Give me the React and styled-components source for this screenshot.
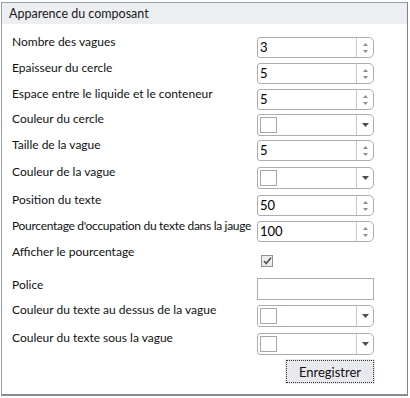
import React from "react";
import styled, { createGlobalStyle } from "styled-components";

const FONT = `Lato, "Liberation Sans", Arial, sans-serif`;

const Global = createGlobalStyle`
  html, body { margin: 0; padding: 0; background: #ffffff; }
  body { font-family: ${FONT}; }
`;

const Frame = styled.div`
  box-sizing: border-box;
  margin: 2px 0 0 1px;
  width: 407px;
  height: 394px;
  border: 1px solid #9aa0a6;
  border-right-color: #7d838a;
  border-bottom: 2px solid #858b92;
  background: #fff;
  display: flex;
  flex-direction: column;
`;

const Header = styled.div`
  height: 21px;
  background: #eceef1;
  padding-left: 7px;
  display: flex;
  align-items: center;
  font-size: 12.5px;
  color: #1a1a1a;
`;

const Body = styled.div`
  padding: 13px 0 0 10px;
  display: flex;
  flex-direction: column;
`;

const Row = styled.div`
  display: flex;
  align-items: flex-start;
  height: ${(p) => p.$h}px;
`;

const Label = styled.div`
  width: 245px;
  margin-top: ${(p) => (p.$shift != null ? p.$shift : -3)}px;
  font-size: 12px;
  line-height: 16px;
  letter-spacing: ${(p) => (p.$tight ? "-0.3px" : "0")};
  color: #111;
  white-space: nowrap;
`;

const Control = styled.div`
  width: 117px;
  display: flex;
  margin-top: ${(p) => p.$top || 0}px;
`;

const SpinBox = styled.div`
  box-sizing: border-box;
  width: 117px;
  height: 21px;
  border: 1px solid #abadb3;
  border-radius: 3px 5px 5px 3px;
  display: flex;
  background: #fff;
`;

const SpinValue = styled.div`
  flex: 1;
  padding-left: 2px;
  font-size: 13px;
  line-height: 19px;
  color: #000;
`;

const Side = styled.div`
  width: 16px;
  border-left: 1px solid #c6c8cc;
  display: flex;
  flex-direction: column;
  align-items: center;
  justify-content: center;
  gap: 4px;
`;

const Arrow = styled.svg`
  display: block;
`;

const ColorBox = styled.div`
  box-sizing: border-box;
  width: 117px;
  height: 22px;
  border: 1px solid #abadb3;
  border-radius: 3px 5px 5px 3px;
  display: flex;
  align-items: center;
  background: #fff;
`;

const Swatch = styled.div`
  box-sizing: border-box;
  width: 17px;
  height: 16px;
  margin-left: 2px;
  border: 1px solid #a3a6ab;
  background: #fff;
`;

const ColorFill = styled.div`
  flex: 1;
`;

const DropSide = styled.div`
  width: 16px;
  height: 100%;
  border-left: 1px solid #c6c8cc;
  display: flex;
  align-items: center;
  justify-content: center;
`;

const TextInput = styled.div`
  box-sizing: border-box;
  width: 117px;
  height: 22px;
  border: 1px solid #abadb3;
  background: #fff;
`;

const Check = styled.div`
  box-sizing: border-box;
  width: 12px;
  height: 12px;
  margin-left: 4px;
  border: 1px solid #8f9399;
  background: #ececec;
  display: flex;
  align-items: center;
  justify-content: center;
`;

const ButtonRow = styled.div`
  display: flex;
  padding-left: 273px;
  margin-top: -1px;
`;

const Button = styled.button`
  box-sizing: border-box;
  width: 90px;
  height: 25px;
  padding: 1px;
  border: none;
  background: #e8e9ec;
  font-family: ${FONT};
  font-size: 13px;
  color: #111;
  cursor: pointer;
`;

const Focus = styled.span`
  box-sizing: border-box;
  display: flex;
  align-items: center;
  justify-content: center;
  width: 100%;
  height: 100%;
  border: 1px dotted #333;
`;

const Up = () => (
  <Arrow width="5" height="3" viewBox="0 0 5 3">
    <path d="M2.5 0 L5 3 L0 3 Z" fill="#8a8d92" />
  </Arrow>
);
const Down = () => (
  <Arrow width="5" height="3" viewBox="0 0 5 3">
    <path d="M0 0 L5 0 L2.5 3 Z" fill="#8a8d92" />
  </Arrow>
);

const Spin = ({ value }) => (
  <SpinBox>
    <SpinValue>{value}</SpinValue>
    <Side>
      <Up />
      <Down />
    </Side>
  </SpinBox>
);

const Color = () => (
  <ColorBox>
    <Swatch />
    <ColorFill />
    <DropSide>
      <Arrow width="7" height="4" viewBox="0 0 7 4">
        <path d="M0 0 L7 0 L3.5 4 Z" fill="#4a4d52" />
      </Arrow>
    </DropSide>
  </ColorBox>
);

const rows = [
  { label: "Nombre des vagues", type: "spin", value: "3", h: 26 },
  { label: "Epaisseur du cercle", type: "spin", value: "5", h: 26 },
  { label: "Espace entre le liquide et le conteneur", type: "spin", value: "5", h: 25 },
  { label: "Couleur du cercle", type: "color", h: 26 },
  { label: "Taille de la vague", type: "spin", value: "5", h: 27 },
  { label: "Couleur de la vague", type: "color", h: 28 },
  { label: "Position du texte", type: "spin", value: "50", h: 26 },
  { label: "Pourcentage d'occupation du texte dans la jauge", type: "spin", value: "100", h: 30, tight: true },
  { label: "Afficher le pourcentage", type: "check", h: 27 },
  { label: "Police", type: "text", h: 27 },
  { label: "Couleur du texte au dessus de la vague", type: "color", h: 28 },
  { label: "Couleur du texte sous la vague", type: "color", h: 27 },
];

export default function App() {
  return (
    <>
      <Global />
      <Frame>
        <Header>Apparence du composant</Header>
        <Body>
          {rows.map((r) => (
            <Row key={r.label} $h={r.h}>
              <Label
                $tight={r.tight}
                $shift={r.type === "check" ? -7 : r.type === "text" ? -1 : -3}
              >
                {r.label}
              </Label>
              <Control $top={r.type === "check" ? 4 : 0}>
                {r.type === "spin" && <Spin value={r.value} />}
                {r.type === "color" && <Color />}
                {r.type === "text" && <TextInput />}
                {r.type === "check" && (
                  <Check>
                    <svg width="9" height="8" viewBox="0 0 9 8">
                      <path d="M1 4 L3.2 6.5 L8 0.8" stroke="#4d5157" strokeWidth="1.6" fill="none" />
                    </svg>
                  </Check>
                )}
              </Control>
            </Row>
          ))}
          <ButtonRow>
            <Button type="button">
              <Focus>Enregistrer</Focus>
            </Button>
          </ButtonRow>
        </Body>
      </Frame>
    </>
  );
}
